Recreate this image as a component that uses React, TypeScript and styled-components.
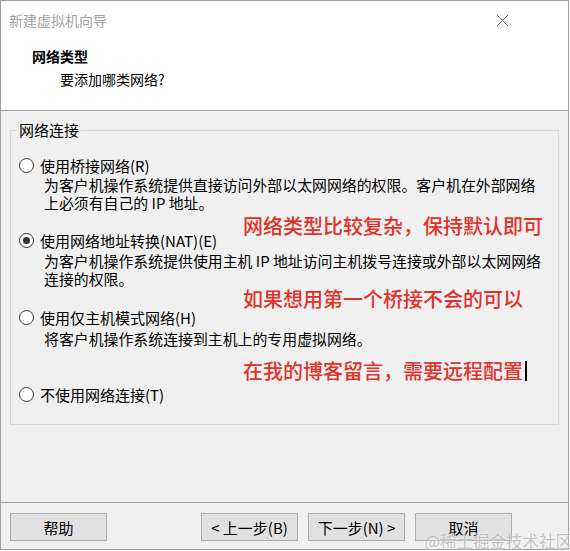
import React from 'react';
import styled, { createGlobalStyle } from 'styled-components';

const FONT = '"Noto Sans CJK SC", "Noto Sans", "Liberation Sans", sans-serif';
const RED = '#e2302b';

const GlobalStyle = createGlobalStyle`
  html, body {
    margin: 0;
    padding: 0;
    background: #ffffff;
  }
  * {
    box-sizing: border-box;
  }
`;

const Window = styled.div`
  position: relative;
  width: 569px;
  height: 550px;
  border: 1px solid #a0a0a0;
  display: flex;
  flex-direction: column;
  font-family: ${FONT};
  color: #000;
`;

const TitleBar = styled.div`
  height: 38px;
  display: flex;
  align-items: center;
  justify-content: space-between;
  padding: 0 59px 0 8px;
  background: #fff;
`;

const TitleText = styled.div`
  font-size: 14px;
  color: #a3a3a3;
`;

const Header = styled.div`
  background: #fff;
  padding: 8px 0 22px 31px;
  border-bottom: 1px solid #a0a0a0;
`;

const HeaderTitle = styled.div`
  font-size: 14px;
  line-height: 18px;
  font-weight: 700;
`;

const HeaderSub = styled.div`
  font-size: 14px;
  line-height: 18px;
  margin: 5px 0 0 28px;
`;

const Body = styled.div`
  flex: 1;
  background: #f0f0f0;
  padding: 10px 9px 0 9px;
`;

const Group = styled.fieldset`
  margin: 0;
  padding: 18px 10px 22px 6px;
  border: 1px solid #dadada;
  min-width: 0;
`;

const Legend = styled.legend`
  padding: 0 2px;
  font-size: 15px;
  line-height: 18px;
`;

const Options = styled.div`
  display: flex;
  flex-direction: column;
  padding-left: 2px;
`;

const RadioRow = styled.div<{ $mt: number }>`
  display: flex;
  align-items: center;
  gap: 6px;
  height: 16px;
  margin-top: ${(p) => p.$mt}px;
  font-size: 15px;
  white-space: nowrap;
`;

const RadioDot = styled.span<{ $checked?: boolean }>`
  position: relative;
  width: 15px;
  height: 15px;
  border-radius: 50%;
  border: 1px solid #333;
  background: #fff;
  flex: none;
  &::after {
    content: '';
    display: ${(p) => (p.$checked ? 'block' : 'none')};
    position: absolute;
    left: 3px;
    top: 3px;
    width: 7px;
    height: 7px;
    border-radius: 50%;
    background: #333;
  }
`;

const Desc = styled.div<{ $mt: number }>`
  margin-top: ${(p) => p.$mt}px;
  padding-left: 25px;
  font-size: 14.9px;
  line-height: 18px;
  white-space: nowrap;
`;

const Note = styled.div<{ $mt: number }>`
  margin-top: ${(p) => p.$mt}px;
  padding-left: 224px;
  height: 12px;
  line-height: 12px;
  font-size: 20px;
  font-weight: 500;
  color: ${RED};
  white-space: nowrap;
  display: flex;
  align-items: center;
`;

const Caret = styled.span`
  display: inline-block;
  width: 2px;
  height: 20px;
  margin-left: 2px;
  background: #000;
`;

const Footer = styled.div`
  background: #f0f0f0;
  border-top: 1px solid #a0a0a0;
  height: 47px;
  padding: 10px 56px 0 9px;
  display: flex;
  justify-content: space-between;
  align-items: flex-start;
`;

const ButtonGroup = styled.div`
  display: flex;
  gap: 10px;
`;

const Button = styled.button`
  width: 97px;
  height: 28px;
  padding: 0;
  border: 1px solid #adadad;
  background: #e1e1e1;
  font-family: ${FONT};
  font-size: 15px;
  color: #000;
  display: flex;
  align-items: center;
  justify-content: center;
`;

// site watermark stamped over the bottom-right corner
const Watermark = styled.div`
  position: absolute;
  right: -4px;
  bottom: -2px;
  font-size: 16.5px;
  line-height: 20px;
  color: rgba(140, 140, 140, 0.5);
  text-shadow: 0 0 2px #fff;
  pointer-events: none;
  white-space: nowrap;
`;

function CloseIcon() {
  return (
    <svg width="13" height="13" viewBox="0 0 13 13">
      <path d="M1 1L12 12M12 1L1 12" stroke="#777" strokeWidth="1" fill="none" />
    </svg>
  );
}

function App() {
  return (
    <>
      <GlobalStyle />
      <Window>
        <TitleBar>
          <TitleText>新建虚拟机向导</TitleText>
          <CloseIcon />
        </TitleBar>
        <Header>
          <HeaderTitle>网络类型</HeaderTitle>
          <HeaderSub>要添加哪类网络?</HeaderSub>
        </Header>

        <Body>
          <Group>
            <Legend>网络连接</Legend>
            <Options>
              <RadioRow $mt={0}>
                <RadioDot />
                使用桥接网络(R)
              </RadioRow>
              <Desc $mt={3}>
                为客户机操作系统提供直接访问外部以太网网络的权限。客户机在外部网络
                <br />
                上必须有自己的 IP 地址。
              </Desc>
              <Note $mt={8}>网络类型比较复杂，保持默认即可</Note>

              <RadioRow $mt={0}>
                <RadioDot $checked />
                使用网络地址转换(NAT)(E)
              </RadioRow>
              <Desc $mt={4}>
                为客户机操作系统提供使用主机 IP 地址访问主机拨号连接或外部以太网网络
                <br />
                连接的权限。
              </Desc>
              <Note $mt={5}>如果想用第一个桥接不会的可以</Note>

              <RadioRow $mt={4}>
                <RadioDot />
                使用仅主机模式网络(H)
              </RadioRow>
              <Desc $mt={5}>将客户机操作系统连接到主机上的专用虚拟网络。</Desc>
              <Note $mt={17}>
                在我的博客留言，需要远程配置
                <Caret />
              </Note>

              <RadioRow $mt={9}>
                <RadioDot />
                不使用网络连接(T)
              </RadioRow>
            </Options>
          </Group>
        </Body>

        <Footer>
          <Button>帮助</Button>
          <ButtonGroup>
            <Button>&lt; 上一步(B)</Button>
            <Button>下一步(N) &gt;</Button>
            <Button>取消</Button>
          </ButtonGroup>
        </Footer>
        <Watermark>@稀土掘金技术社区</Watermark>
      </Window>
    </>
  );
}

export default App;
